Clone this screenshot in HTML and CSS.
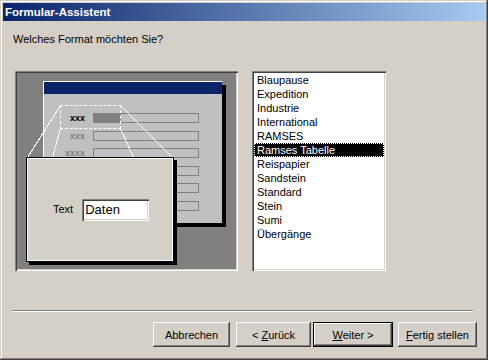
FILE: index.html
```html
<!DOCTYPE html>
<html lang="de">
<head>
    <meta charset="UTF-8">
    <title>Formular-Assistent</title>
    <link rel="stylesheet" href="styles.css">
</head>
<body>
    <div class="window">
        <div class="titlebar">Formular-Assistent</div>

        <div class="content">
            <p class="question">Welches Format möchten Sie?</p>

            <div class="main">
                <!-- Format preview -->
                <div class="preview">
                    <div class="form">
                        <div class="form-title"></div>
                        <div class="rows">
                            <div class="row"><span class="label active">xxx</span><span class="field"><span class="fill"></span></span></div>
                            <div class="row"><span class="label">xxx</span><span class="field"></span></div>
                            <div class="row"><span class="label">xxxx</span><span class="field"></span></div>
                            <!-- these rows sit under the zoom box -->
                            <div class="row"><span class="label"></span><span class="field"></span></div>
                            <div class="row"><span class="label"></span><span class="field"></span></div>
                            <div class="row"><span class="label"></span><span class="field"></span></div>
                        </div>
                    </div>
                    <div class="zoom-rect"></div>
                    <svg class="zoom-lines" width="223" height="200">
                        <line x1="45.5" y1="34.5" x2="12.5" y2="86.5"/>
                        <line x1="105.5" y1="34.5" x2="157.5" y2="86.5"/>
                        <line x1="45.5" y1="57.5" x2="37.5" y2="86.5"/>
                        <line x1="105.5" y1="57.5" x2="118.5" y2="86.5"/>
                    </svg>
                    <div class="popup">
                        <span class="popup-label">Text</span>
                        <span class="input">Daten</span>
                    </div>
                </div>

                <!-- Format list -->
                <ul class="list">
                    <li>Blaupause</li>
                    <li>Expedition</li>
                    <li>Industrie</li>
                    <li>International</li>
                    <li>RAMSES</li>
                    <li class="selected">Ramses Tabelle</li>
                    <li>Reispapier</li>
                    <li>Sandstein</li>
                    <li>Standard</li>
                    <li>Stein</li>
                    <li>Sumi</li>
                    <li>Übergänge</li>
                </ul>
            </div>

            <div class="separator"></div>

            <div class="buttons">
                <button class="btn btn-cancel">Abbrechen</button>
                <button class="btn btn-back">&lt; <u>Z</u>urück</button>
                <button class="btn btn-next default"><u>W</u>eiter &gt;</button>
                <button class="btn btn-finish"><u>F</u>ertig stellen</button>
            </div>
        </div>
    </div>
</body>
</html>
```

FILE: styles.css
```css
/* Basic window */
body {
    margin: 0;
    background: #d4d0c8;
    font-family: 'Liberation Sans', Arial, sans-serif;
    font-size: 11px;
    color: #000;
}

.window {
    width: 488px;
    height: 360px;
    box-sizing: border-box;
    padding: 3px;
    background: #d4d0c8;
    box-shadow: inset -1px -1px #404040, inset 1px 1px #d4d0c8,
                inset -2px -2px #808080, inset 2px 2px #fff;
    display: flex;
    flex-direction: column;
}

.titlebar {
    height: 18px;
    line-height: 18px;
    padding-left: 2px;
    background: linear-gradient(to right, #0a246a, #a6caf0);
    color: #fff;
    font-weight: bold;
    font-size: 11.5px;
}

.question {
    margin: 11px 0 0 10px;
    line-height: 14px;
}

.main {
    display: flex;
    align-items: flex-start;
    gap: 14px;
    margin: 25px 0 0 12px;
}

/* Preview picture */
.preview {
    position: relative;
    width: 223px;
    height: 200px;
    background: #808080;
    box-shadow: inset 1px 1px #808080, inset 2px 2px #404040,
                inset -1px -1px #fff, inset -2px -2px #d4d0c8;
    overflow: hidden;
}

.form {
    position: absolute;
    left: 28px;
    top: 10px;
    width: 179px;
    height: 142px;
    box-sizing: border-box;
    background: #c0c0c0;
    border-left: 1px solid #fff;
    border-top: 1px solid #fff;
    box-shadow: 4px 4px 0 #000;
}

.form-title {
    height: 12px;
    background: #0a246a;
}

.rows {
    display: flex;
    flex-direction: column;
    gap: 7.6px;
    margin-top: 19px;
}

.row {
    display: flex;
    align-items: center;
    gap: 8px;
    height: 10px;
}

.label {
    width: 41px;
    text-align: right;
    font-size: 9px;
    font-weight: bold;
    line-height: 10px;
    color: #808080;
}

.label.active {
    color: #000;
}

.field {
    display: flex;
    width: 106px;
    height: 10px;
    box-sizing: border-box;
    border: 1px solid #808080;
}

.fill {
    width: 27px;
    background: #808080;
}

.zoom-rect {
    position: absolute;
    left: 45px;
    top: 34px;
    width: 61px;
    height: 24px;
    box-sizing: border-box;
    border: 1px dashed #fff;
}

.zoom-lines {
    position: absolute;
    left: 0;
    top: 0;
}

.zoom-lines line {
    stroke: #fff;
    stroke-width: 1;
    shape-rendering: crispEdges;
}

.popup {
    position: absolute;
    left: 11px;
    top: 86px;
    width: 148px;
    height: 105px;
    box-sizing: border-box;
    padding-left: 26px;
    display: flex;
    align-items: center;
    gap: 9px;
    background: #d4d0c8;
    border: 1px solid #000;
    box-shadow: inset 1px 1px #fff, inset -1px -1px #fff, 3px 3px 0 #000;
}

.popup-label {
    line-height: 13px;
}

.input {
    width: 67px;
    height: 22px;
    box-sizing: border-box;
    padding-left: 3px;
    line-height: 22px;
    font-size: 13px;
    background: #fff;
    box-shadow: inset 1px 1px #808080, inset 2px 2px #404040,
                inset -1px -1px #fff, inset -2px -2px #d4d0c8;
}

/* List box */
.list {
    margin: 0;
    padding: 2px;
    list-style: none;
    width: 134px;
    height: 200px;
    box-sizing: border-box;
    background: #fff;
    box-shadow: inset 1px 1px #808080, inset 2px 2px #404040,
                inset -1px -1px #fff, inset -2px -2px #d4d0c8;
}

.list li {
    height: 14px;
    line-height: 14px;
    padding-left: 3px;
}

.list li.selected {
    background: #000;
    color: #fff;
    outline: 1px dotted #fff;
    outline-offset: -1px;
}

.separator {
    margin: 39px 0 0 9px;
    width: 461px;
    border-top: 1px solid #808080;
    border-bottom: 1px solid #fff;
}

/* Buttons */
.buttons {
    display: flex;
    margin: 10px 0 0 150px;
}

.btn {
    height: 25px;
    padding: 0;
    border: none;
    background: #d4d0c8;
    font-family: 'Liberation Sans', Arial, sans-serif;
    font-size: 11px;
    color: #000;
    box-shadow: inset -1px -1px #404040, inset 1px 1px #fff,
                inset -2px -2px #808080, inset 2px 2px #d4d0c8;
}

.btn-cancel { width: 77px; margin-right: 6px; }
.btn-back { width: 75px; margin-right: 2px; }
.btn-next { width: 80px; margin-right: 5px; }
.btn-finish { width: 79px; }

.btn.default {
    border: 1px solid #000;
}
```
